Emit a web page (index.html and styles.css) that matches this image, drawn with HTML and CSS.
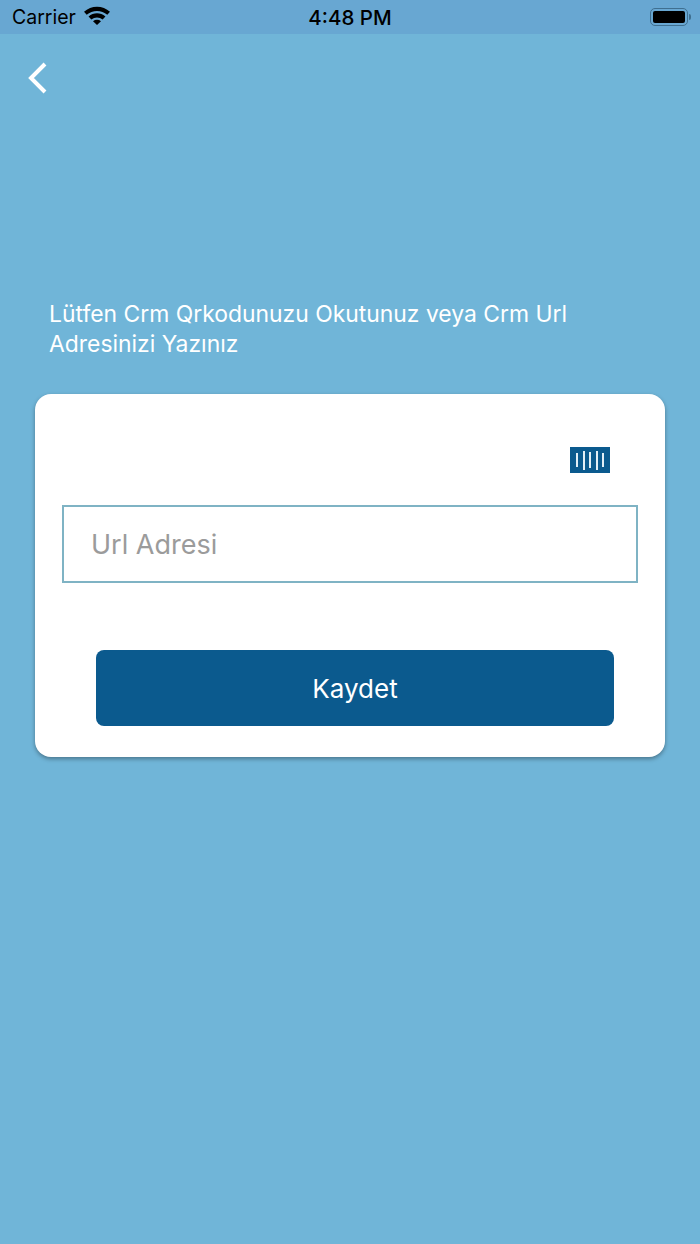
FILE: index.html
```html
<!DOCTYPE html>
<html lang="tr">
<head>
    <meta charset="UTF-8">
    <meta name="viewport" content="width=device-width, initial-scale=1.0">
    <title>Crm Url</title>
    <link rel="stylesheet" href="styles.css">
</head>
<body>

    <div class="status-bar">
        <div class="status-left">
            <span>Carrier</span>
            <svg class="wifi" width="26" height="19" viewBox="1 1 24 17.500">
                <path d="M1 6.400C7.500.1 18.500.1 25 6.400l-2.500 2.700C17.300 4.300 8.700 4.300 3.500 9.100z"/>
                <path d="M5.200 10.700c4.600-4 11-4 15.600 0l-2.600 2.700c-3.100-2.500-7.300-2.500-10.400 0z"/>
                <path d="M9.300 15c2.200-1.700 5.200-1.700 7.400 0L13 18.500z"/>
            </svg>
        </div>
        <div class="status-time">4:48 PM</div>
        <div class="status-right">
            <div class="battery"><div class="battery-fill"></div></div>
            <div class="battery-cap"></div>
        </div>
    </div>

    <div class="top-nav">
        <button class="back-button">
            <svg width="24" height="34" viewBox="0 0 24 34">
                <path d="M20 3 6 17l14 14" fill="none" stroke="#fff" stroke-width="4"/>
            </svg>
        </button>
    </div>

    <main class="content">
        <p class="intro">Lütfen Crm Qrkodunuzu Okutunuz veya Crm Url Adresinizi Yazınız</p>

        <div class="card">
            <div class="scan-row">
                <div class="scan-icon">
                    <span class="line short"></span>
                    <span class="line"></span>
                    <span class="line mid"></span>
                    <span class="line"></span>
                    <span class="line short"></span>
                </div>
            </div>
            <input class="url-input" type="text" placeholder="Url Adresi">
            <button class="save-button">Kaydet</button>
        </div>
    </main>

</body>
</html>
```

FILE: styles.css
```css
* {
    box-sizing: border-box;
}

html, body {
    height: 100%;
}

body {
    margin: 0;
    background-color: #70b5d8;
    font-family: Inter, "Noto Sans", "Liberation Sans", sans-serif;
    overflow: hidden;
}

/* Status bar */
.status-bar {
    display: grid;
    grid-template-columns: 1fr auto 1fr;
    align-items: center;
    height: 34px;
    padding: 0 9px 0 12px;
    background-color: #68a7d2;
    color: #000;
    font-size: 19.5px;
}

.status-left {
    display: flex;
    align-items: center;
    gap: 8px;
}

.wifi {
    margin-top: -3px;
}

.status-time {
    font-weight: 500;
    font-size: 20.5px;
    margin-left: -3px;
}

.status-right {
    display: flex;
    justify-content: flex-end;
    align-items: center;
    gap: 1px;
}

.battery {
    width: 38px;
    height: 18px;
    padding: 2px;
    border: 1.5px solid #3f6f90;
    border-radius: 5px;
}

.battery-fill {
    height: 100%;
    background-color: #000;
    border-radius: 2px;
}

.battery-cap {
    width: 2px;
    height: 6px;
    background-color: #3f6f90;
    border-radius: 0 2px 2px 0;
}

/* Back button */
.top-nav {
    padding: 27px 0 0 25px;
    height: 110px;
}

.back-button {
    display: block;
    padding: 0;
    background: none;
    border: none;
    cursor: pointer;
}

/* Main content */
.content {
    padding: 155px 35px 0;
}

.intro {
    margin: 0 40px 35px 14px;
    color: #fff;
    font-size: 22.900px;
    line-height: 30px;
}

.card {
    display: flex;
    flex-direction: column;
    height: 363px;
    padding: 53px 27px 0;
    background-color: #fff;
    border-radius: 16px;
    box-shadow: 0 2px 4px rgba(0, 0, 0, 0.35);
}

.scan-row {
    display: flex;
    justify-content: flex-end;
    padding-right: 28px;
}

.scan-icon {
    display: flex;
    justify-content: center;
    align-items: center;
    gap: 4.500px;
    width: 40px;
    height: 26px;
    background-color: #0b5a8e;
}

.line {
    width: 2px;
    height: 19px;
    background-color: #e3eff6;
}

.line.mid {
    height: 16px;
}

.line.short {
    height: 14px;
}

.url-input {
    height: 78px;
    margin-top: 32px;
    padding: 0 27px;
    border: 2px solid #7fb3c4;
    border-radius: 0;
    outline: none;
    font-family: inherit;
    font-size: 27px;
    color: #333;
}

.url-input::placeholder {
    color: #9b9b9b;
    opacity: 1;
}

.save-button {
    align-self: flex-start;
    width: 518px;
    height: 76px;
    margin: 67px 0 0 34px;
    background-color: #0b5a8e;
    color: #fff;
    border: none;
    border-radius: 8px;
    font-family: inherit;
    font-size: 26px;
    cursor: pointer;
}
```
